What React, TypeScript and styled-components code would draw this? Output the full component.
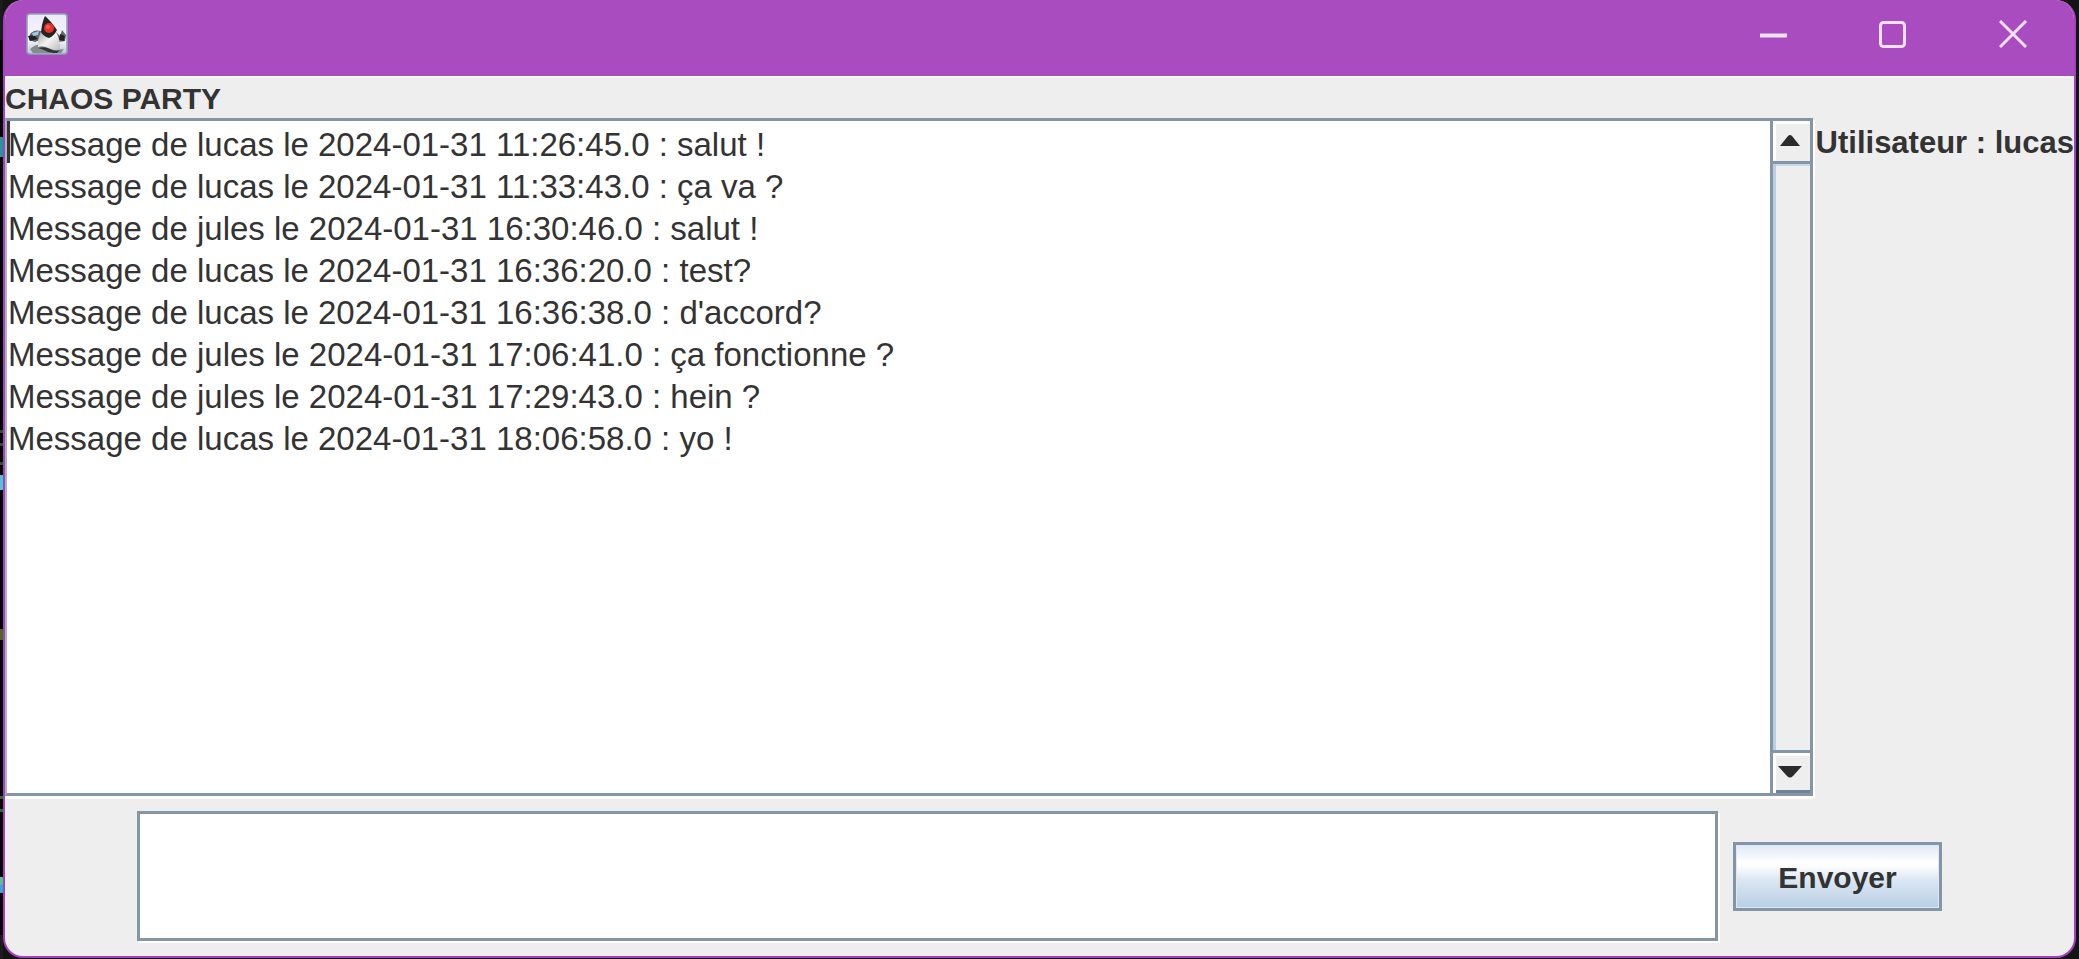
import React from "react";
import styled, { createGlobalStyle } from "styled-components";

const steel = "#8495a6";

const GlobalStyle = createGlobalStyle`
  * { box-sizing: border-box; }
  body { margin: 0; background: #0b0b0b; }
  button, textarea { font: inherit; color: inherit; }
`;

const Desktop = styled.div`
  display: flex;
  min-height: 100vh;
  padding: 0 3px 1px 3px;
  font-family: "Liberation Sans", Arial, sans-serif;
  color: #333;
  background: linear-gradient(
    #1c1c1c 0 40px, #050505 40px 137px, #1d9a98 137px 157px, #050505 157px 430px,
    #1f5a2a 430px 433px, #050505 433px 443px, #1f5a2a 443px 446px, #050505 446px 462px,
    #1f5a2a 462px 465px, #050505 465px 475px, #4fc4d8 475px 490px, #050505 490px 629px,
    #4b6a1c 629px 640px, #050505 640px 796px, #2d6a35 796px 799px, #050505 799px 809px,
    #2d6a35 809px 812px, #050505 812px 877px, #5bbf9a 877px 885px, #35a8dc 885px 893px,
    #050505 893px 935px, #1c1c1c 935px
  ) left / 3px 100% no-repeat #141414;
`;

const Window = styled.main`
  display: flex;
  flex-direction: column;
  flex: 1;
  min-width: 0;
  overflow: hidden;
  border: 2px solid #a83fbd;
  border-top: 0;
  border-radius: 20px;
  background: #eee;
`;

const TitleBar = styled.header`
  display: flex;
  justify-content: space-between;
  height: 76px;
  background: #a94cc0;
`;

const AppIcon = styled.svg`
  width: 42px;
  height: 42px;
  margin: 13px 0 0 21px;
`;

const WindowControls = styled.div`
  display: flex;
`;

const WindowButton = styled.button`
  display: flex;
  justify-content: center;
  width: 120px;
  padding: 20px 0 0;
  border: 0;
  background: transparent;
  svg {
    width: 30px;
    height: 30px;
    fill: none;
    stroke: #f3e2f7;
    stroke-width: 3;
  }
`;

const RoomName = styled.h1`
  margin: 0;
  height: 42px;
  border-top: 2px solid #f8f8f8;
  font-size: 30px;
  line-height: 42px;
  font-weight: bold;
`;

const Conversation = styled.div`
  display: flex;
  flex: 1;
`;

const ScrollPane = styled.section`
  display: flex;
  flex: 1;
  min-width: 0;
  border: 3px solid ${steel};
  border-left: 2px solid #a9b4c0;
  box-shadow: 0 3px 0 #fff, 2px 2px 0 #fff;
`;

const MessageList = styled.ul`
  position: relative;
  flex: 1;
  min-width: 0;
  margin: 0;
  padding: 3px 0 0 1px;
  list-style: none;
  background: #fff;
  font-size: 33px;
  line-height: 42px;
  &::before {
    content: "";
    position: absolute;
    left: 0;
    top: 0;
    width: 3px;
    height: 42px;
    background: #333;
  }
`;

const ScrollBar = styled.div`
  display: flex;
  flex-direction: column;
  width: 40px;
  border-left: 3px solid ${steel};
`;

const ArrowButton = styled.button<{ $end?: boolean }>`
  display: flex;
  align-items: center;
  justify-content: center;
  height: 40px;
  padding: 0 3px 5px 0;
  border: 0;
  border-top: 3px solid #fff;
  background: #eee;
  box-shadow: inset 3px 0 0 #fff${(p) => (p.$end ? ", inset 0 -3px 0 #718294" : "")};
  svg {
    width: 24px;
    height: 12px;
    fill: #2b2b2b;
  }
`;

const Track = styled.div`
  flex: 1;
  border-top: 3px solid ${steel};
  border-bottom: 3px solid ${steel};
  box-shadow: inset 3px 0 0 #b8cfe5, inset 0 2px 0 #c9d9ea;
`;

const UserLabel = styled.aside`
  padding: 4px 0 0 3px;
  font-size: 31px;
  line-height: 42px;
  font-weight: bold;
  white-space: nowrap;
`;

const Composer = styled.form`
  display: flex;
  align-items: center;
  gap: 15px;
  padding: 15px 132px;
`;

const MessageInput = styled.textarea`
  display: block;
  flex: 1;
  min-width: 0;
  height: 130px;
  padding: 2px;
  resize: none;
  outline: 0;
  border: 3px solid ${steel};
  border-radius: 0;
  background: #fff;
  box-shadow: 2px 2px 0 #fff;
  font-size: 33px;
  line-height: 42px;
`;

const SendButton = styled.button`
  width: 209px;
  height: 69px;
  padding: 4px 0 0;
  border: 3px solid ${steel};
  background: linear-gradient(#dfeaf6 0%, #fff 28%, #fff 32%, #dce7f3 55%, #b8cfe5 100%);
  box-shadow: inset 0 0 0 1px #dce8f4;
  font-size: 30px;
  font-weight: bold;
`;

const messages = [
  { user: "lucas", date: "2024-01-31 11:26:45.0", text: "salut !" },
  { user: "lucas", date: "2024-01-31 11:33:43.0", text: "ça va ?" },
  { user: "jules", date: "2024-01-31 16:30:46.0", text: "salut !" },
  { user: "lucas", date: "2024-01-31 16:36:20.0", text: "test?" },
  { user: "lucas", date: "2024-01-31 16:36:38.0", text: "d'accord?" },
  { user: "jules", date: "2024-01-31 17:06:41.0", text: "ça fonctionne ?" },
  { user: "jules", date: "2024-01-31 17:29:43.0", text: "hein ?" },
  { user: "lucas", date: "2024-01-31 18:06:58.0", text: "yo !" },
];

function DukeIcon() {
  return (
    <AppIcon viewBox="0 0 42 42" aria-hidden="true">
      <defs>
        <linearGradient id="tile" x1="0" y1="0" x2="0" y2="1">
          <stop offset="0" stopColor="#eceaf8" />
          <stop offset="0.65" stopColor="#f4f5fa" />
          <stop offset="1" stopColor="#b9c6cf" />
        </linearGradient>
        <linearGradient id="belly" x1="0" y1="0" x2="1" y2="1">
          <stop offset="0" stopColor="#999" />
          <stop offset="0.5" stopColor="#f4f4f4" />
          <stop offset="1" stopColor="#bbb" />
        </linearGradient>
      </defs>
      <rect x="1" y="1" width="40" height="40" rx="3" fill="url(#tile)" stroke="#8fa3b8" strokeWidth="1.5" />
      <path d="M4 36Q12 29 20 33T38 36L35 40H7Z" fill="#858c90" />
      <path d="M15 18Q8 16 4 21L3 27L9 29L14 27ZM29 18L34 23L36 17L40 22L39 28L33 29L28 25Z" fill="#666" />
      <path d="M2 23L8 22L12 26L4 28ZM34 21L39 23L38 28L33 27Z" fill="#222" />
      <path d="M6 20L13 18L12 22L7 23Z" fill="#9cc8ee" />
      <path d="M15 19Q11 27 12 34Q17 32 22 35Q29 38 34 37Q35 27 29 17Z" fill="url(#belly)" />
      <path d="M19 3Q24 7 31 17Q28 23 23 25Q17 23 15 19Q16 9 19 3Z" fill="#242424" />
      <circle cx="23" cy="15" r="5" fill="#e8302c" />
      <circle cx="22" cy="14" r="2" fill="#ff6058" />
      <path d="M12 35Q19 33 24 36T34 37L31 40Q24 40 20 38T12 35Z" fill="#333" />
    </AppIcon>
  );
}

export default function App() {
  return (
    <Desktop>
      <GlobalStyle />
      <Window>
        <TitleBar>
          <DukeIcon />
          <WindowControls>
            <WindowButton type="button" aria-label="Réduire">
              <svg viewBox="0 0 30 30"><path d="M1 15.500H28" strokeWidth="4" /></svg>
            </WindowButton>
            <WindowButton type="button" aria-label="Agrandir">
              <svg viewBox="0 0 30 30"><rect x="1.500" y="2.500" width="24" height="24" rx="3" /></svg>
            </WindowButton>
            <WindowButton type="button" aria-label="Fermer">
              <svg viewBox="0 0 30 30"><path d="M1 1L27 27M27 1L1 27" /></svg>
            </WindowButton>
          </WindowControls>
        </TitleBar>
        <RoomName>CHAOS PARTY</RoomName>
        <Conversation>
          <ScrollPane aria-label="Messages">
            <MessageList>
              {messages.map((m) => (
                <li key={m.date}>{`Message de ${m.user} le ${m.date} : ${m.text}`}</li>
              ))}
            </MessageList>
            <ScrollBar>
              <ArrowButton type="button" aria-label="Défiler vers le haut">
                <svg viewBox="0 0 24 12"><path d="M2 12L10 2Q12 0 14 2L22 12Z" /></svg>
              </ArrowButton>
              <Track />
              <ArrowButton type="button" aria-label="Défiler vers le bas" $end>
                <svg viewBox="0 0 24 12"><path d="M0 0H24L15 10Q12 13 9 10Z" /></svg>
              </ArrowButton>
            </ScrollBar>
          </ScrollPane>
          <UserLabel>Utilisateur : lucas</UserLabel>
        </Conversation>
        <Composer onSubmit={(e) => e.preventDefault()}>
          <MessageInput aria-label="Votre message" />
          <SendButton type="submit">Envoyer</SendButton>
        </Composer>
      </Window>
    </Desktop>
  );
}
